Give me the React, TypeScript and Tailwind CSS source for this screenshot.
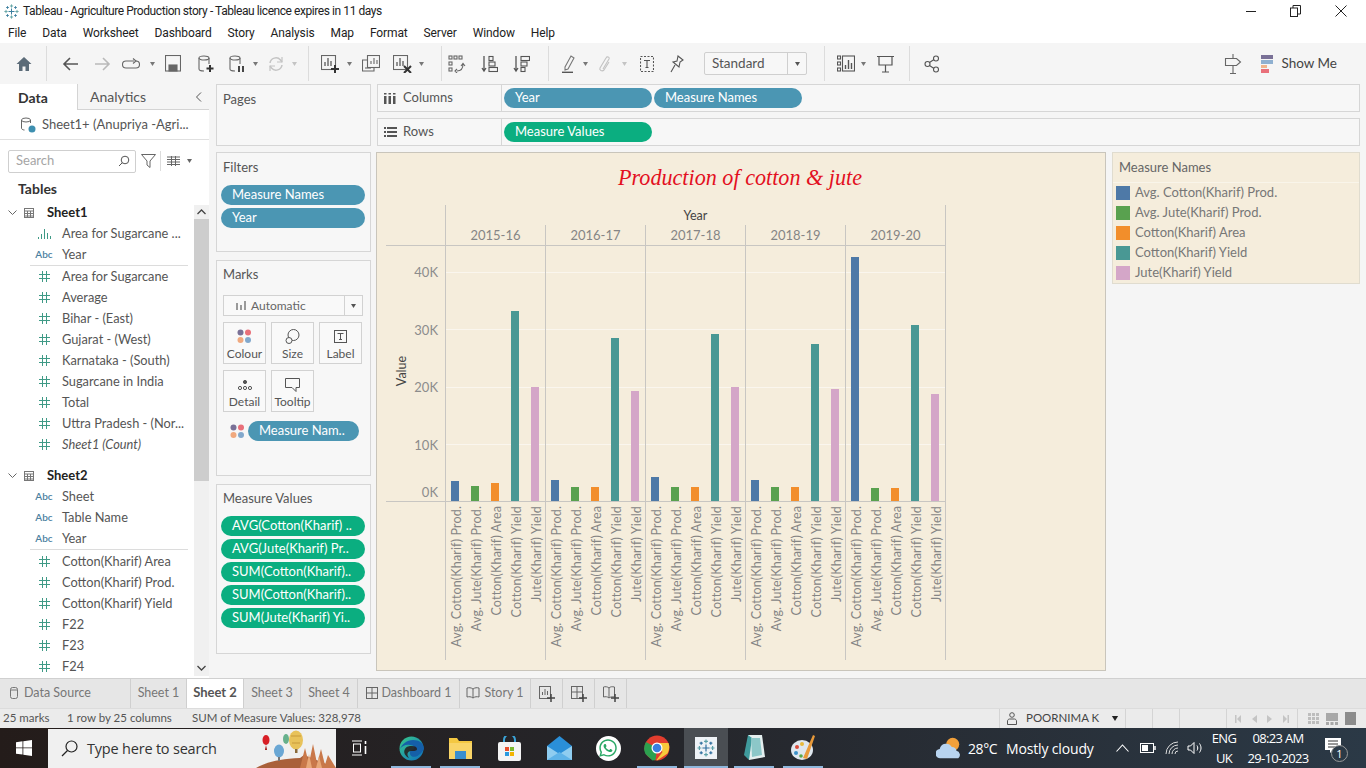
import React from "react";
import { FaWhatsapp } from "react-icons/fa";

const UI = "font-['Lato','Open_Sans',sans-serif]";

function Ic({ w, h = 18, cls = "", children }: { w: number; h?: number; cls?: string; children: React.ReactNode }) {
  return (
    <svg width={w} height={h} viewBox={`0 0 ${w} ${h}`} fill="none" stroke="currentColor" strokeWidth="1.1" className={`shrink-0 ${cls}`}>
      {children}
    </svg>
  );
}

function Caret({ cls = "" }: { cls?: string }) {
  return (
    <svg width="5" height="4" viewBox="0 0 5 4" className={`shrink-0 ${cls}`}>
      <path d="M0 0h5L2.5 4z" fill="currentColor" />
    </svg>
  );
}

function Sep({ cls = "" }: { cls?: string }) {
  return <div className={`w-px h-[35px] bg-[#dcdcdc] shrink-0 ${cls}`} />;
}

function TableauLogo({ size = 15, dark = false }: { size?: number; dark?: boolean }) {
  const c1 = dark ? "#2f6f9f" : "#3d7f9f";
  const c2 = dark ? "#5aa0a8" : "#6aa8a8";
  const Cross = ({ x, y, r, c }: { x: number; y: number; r: number; c: string }) => (
    <path d={`M${x - r} ${y}H${x + r}M${x} ${y - r}V${y + r}`} stroke={c} strokeWidth="1" />
  );
  return (
    <svg width={size} height={size} viewBox="0 0 15 15" className="shrink-0">
      <Cross x={7.5} y={7.5} r={3} c={c1} />
      <Cross x={7.5} y={2} r={1.6} c={c2} />
      <Cross x={7.5} y={13} r={1.6} c={c2} />
      <Cross x={2} y={7.5} r={1.6} c={c2} />
      <Cross x={13} y={7.5} r={1.6} c={c2} />
      <Cross x={3.5} y={3.5} r={1.3} c={c1} />
      <Cross x={11.5} y={3.5} r={1.3} c={c1} />
      <Cross x={3.5} y={11.5} r={1.3} c={c1} />
      <Cross x={11.5} y={11.5} r={1.3} c={c1} />
    </svg>
  );
}

function Toolbar() {
  return (
    <div className="h-[41px] bg-[#f5f5f5] flex items-center shrink-0 text-[#555]">
      <Ic w={16} h={16} cls="ml-[16px] text-[#5b6b78]">
        <path d="M8 1L0.5 8H3v7h3.5v-4.5h3V15H13V8h2.5z" fill="currentColor" stroke="none" />
      </Ic>
      <Sep cls="ml-[14px]" />
      <Ic w={17} cls="ml-[15px] text-[#555]">
        <path d="M16 9H2M8 3L2 9l6 6" strokeWidth="1.6" />
      </Ic>
      <Ic w={17} cls="ml-[15px] text-[#b9b9b9]">
        <path d="M1 9h14M9 3l6 6-6 6" strokeWidth="1.6" />
      </Ic>
      <Ic w={18} cls="ml-[11px] text-[#666]">
        <path d="M12 6H4a3 3 0 000 7h10a3 3 0 000-7" />
        <path d="M11 3.5L14 6l-3 2.5" />
      </Ic>
      <Caret cls="ml-[10px] text-[#777]" />
      <Ic w={16} h={17} cls="ml-[10px] text-[#666]">
        <rect x=".5" y=".5" width="15" height="15.5" />
        <rect x="4" y="10" width="8" height="6" fill="currentColor" />
      </Ic>
      <Ic w={17} cls="ml-[16px] text-[#666]">
        <ellipse cx="7" cy="3" rx="5" ry="2" />
        <path d="M2 3v11c0 1 1 2 5 2M12 3v6" />
        <path d="M13 10v7M9.5 13.5h7" stroke="#333" strokeWidth="2" />
      </Ic>
      <Ic w={17} cls="ml-[14px] text-[#666]">
        <ellipse cx="7" cy="3" rx="5" ry="2" />
        <path d="M2 3v11c0 1 1 2 5 2M12 3v6" />
        <path d="M11 11v6M15 11v6" stroke="#333" strokeWidth="1.8" />
      </Ic>
      <Caret cls="ml-[8px] text-[#777]" />
      <Ic w={16} cls="ml-[10px] text-[#c4c4c4]">
        <path d="M2 8a6 6 0 0110.5-3L14 7M14 10a6 6 0 01-10.5 3L2 11" strokeWidth="1.5" />
        <path d="M14 2v5H9M2 16v-5h5" strokeWidth="1.2" />
      </Ic>
      <Caret cls="ml-[8px] text-[#c4c4c4]" />
      <Sep cls="ml-[11px]" />
      <Ic w={19} cls="ml-[12px] text-[#666]">
        <rect x=".5" y=".5" width="14" height="14" />
        <path d="M4 11V7M7 11V3M10 11V6" strokeWidth="1.4" />
        <path d="M14 10v8M10 14h8" stroke="#333" strokeWidth="2" />
      </Ic>
      <Caret cls="ml-[7px] text-[#777]" />
      <Ic w={18} cls="ml-[10px] text-[#666]">
        <rect x="5.5" y=".5" width="12" height="12" />
        <path d="M9 9V6M12 9V3M15 9V5" />
        <path d="M5 5H.5v11H12v-3" />
        <path d="M3 13h6" />
      </Ic>
      <Ic w={19} cls="ml-[13px] text-[#666]">
        <rect x=".5" y=".5" width="14" height="14" />
        <path d="M4 11V7M7 11V3M10 11V6" strokeWidth="1.4" />
        <path d="M11 11l7 7M18 11l-7 7" stroke="#333" strokeWidth="2" />
      </Ic>
      <Caret cls="ml-[7px] text-[#777]" />
      <Sep cls="ml-[17px]" />
      <Ic w={18} cls="ml-[6px] text-[#666]">
        <rect x="1" y="1" width="3" height="3" /><rect x="6" y="1" width="3" height="3" /><rect x="11" y="1" width="3" height="3" />
        <rect x="1" y="7" width="3" height="3" /><rect x="1" y="13" width="3" height="3" />
        <path d="M9 16c4 0 6-2 6-7M13 11l2-2.500 2 2.500M9 14l-2 2 2 2" />
      </Ic>
      <Ic w={17} cls="ml-[15px] text-[#555]">
        <path d="M3 1v15M1 13l2 3 2-3" strokeWidth="1.3" />
        <rect x="8" y="1.500" width="4" height="4" /><rect x="8" y="7" width="6" height="4" /><rect x="8" y="12.500" width="8.500" height="4" />
      </Ic>
      <Ic w={17} cls="ml-[15px] text-[#555]">
        <path d="M3 1v15M1 13l2 3 2-3" strokeWidth="1.3" />
        <rect x="8" y="1.500" width="8.500" height="4" /><rect x="8" y="7" width="6" height="4" /><rect x="8" y="12.500" width="4" height="4" />
      </Ic>
      <Sep cls="ml-[18px]" />
      <Ic w={14} cls="ml-[12px] text-[#777]">
        <path d="M4 12L10 1l3 2-6 11-3 1z" />
        <path d="M1 17.500h11" stroke="#555" strokeWidth="1.8" />
      </Ic>
      <Caret cls="ml-[8px] text-[#777]" />
      <Ic w={13} cls="ml-[10px] text-[#c2c2c2]">
        <path d="M11 7l-5 8c-2 2-5 0-4-2l6-10c1-2 4-1 3 1l-6 10" />
      </Ic>
      <Caret cls="ml-[11px] text-[#c4c4c4]" />
      <Ic w={14} h={16} cls="ml-[13px] text-[#555]">
        <rect x=".5" y=".5" width="13" height="15" strokeDasharray="2 1.500" />
        <path d="M4 4.500h6M7 4.500v7M5.500 11.500h3" />
      </Ic>
      <Ic w={14} cls="ml-[16px] text-[#555]">
        <path d="M8 1l5 4-3 2-1 5-6-5 4-1zM5 10l-4 7" />
      </Ic>
      <div className="ml-[20px] w-[103px] h-[23px] border border-[#cfcfcf] rounded-[2px] bg-[#f7f7f7] flex items-center shrink-0">
        <span className="pl-[7px] flex-1 text-[13.5px] text-[#555]">Standard</span>
        <div className="w-[19px] h-[21px] border-l border-[#cfcfcf] flex items-center justify-center">
          <Caret cls="text-[#555]" />
        </div>
      </div>
      <Sep cls="ml-[17px]" />
      <Ic w={18} cls="ml-[12px] text-[#555]">
        <rect x=".5" y="1" width="3" height="3" /><rect x=".5" y="7" width="3" height="3" /><rect x=".5" y="13" width="3" height="3" />
        <rect x="5.500" y="1" width="12" height="15" />
        <path d="M8.500 14v-4M11.500 14V5M14.500 14V8" strokeWidth="1.4" />
      </Ic>
      <Caret cls="ml-[6px] text-[#777]" />
      <Ic w={17} cls="ml-[11px] text-[#555]">
        <path d="M0 1.500h17M2 1.500V10h13V1.500M8.500 10v7M5 17h7" strokeWidth="1.2" />
      </Ic>
      <Sep cls="ml-[15px]" />
      <Ic w={16} cls="ml-[14px] text-[#555]">
        <circle cx="3.500" cy="9" r="2.500" /><circle cx="12" cy="3.500" r="2.500" /><circle cx="12" cy="14.500" r="2.500" />
        <path d="M5.500 7.500l4.500-3M5.500 10.500l4.500 3" />
      </Ic>
      <div className="flex-1" />
      <Ic w={18} h={20} cls="text-[#666]">
        <path d="M9 0v4.500M1.500 4.500h11l4 3.500-4 3.500h-11zM9 11.500V19.500M6 19.500h6" />
      </Ic>
      <div className="ml-[19px] w-[12px] flex flex-col gap-[1px] shrink-0">
        <div className="h-[4px] w-[12px] bg-[#7a7197]" />
        <div className="h-[4px] w-[12px] bg-[#8fb0d0]" />
        <div className="h-[3px] w-[6px] bg-[#f0b48c]" />
        <div className="h-[4px] w-[8px] bg-[#e9707a]" />
      </div>
      <span className="ml-[8px] mr-[29px] text-[13.5px] text-[#444]">Show Me</span>
    </div>
  );
}

type Kind = "hash" | "abc" | "bars";

function FieldIcon({ k }: { k: Kind }) {
  if (k === "abc") return <span className="w-[24px] text-center text-[10px] font-semibold text-[#4b7f9f]">Abc</span>;
  if (k === "bars")
    return (
      <span className="w-[24px] flex justify-center">
        <svg width="15" height="10" viewBox="0 0 15 10" stroke="#3f9a86" strokeWidth="1">
          <path d="M1.500 10V8M4.500 10V5M7.500 10V0M10.500 10V4M13.500 10V7" />
        </svg>
      </span>
    );
  return (
    <span className="w-[24px] flex justify-center">
      <svg width="11" height="11" viewBox="0 0 11 11" stroke="#3f9a86" strokeWidth="1">
        <path d="M3.500 0v11M7.500 0v11M0 3.500h11M0 7.500h11" />
      </svg>
    </span>
  );
}

function Field({ k, t, i }: { k: Kind; t: string; i?: boolean }) {
  return (
    <div className="h-[21px] flex items-center pl-[32px] shrink-0">
      <FieldIcon k={k} />
      <span className={`ml-[6px] text-[12.8px] whitespace-nowrap text-[#555] ${i ? "italic" : ""}`}>{t}</span>
    </div>
  );
}

function TableHead({ t }: { t: string }) {
  return (
    <div className="h-[21px] flex items-center shrink-0">
      <svg width="9" height="6" viewBox="0 0 9 6" className="ml-[8px]" fill="none" stroke="#666"><path d="M.5.500l4 4 4-4" /></svg>
      <svg width="10" height="10" viewBox="0 0 10 10" className="ml-[7px]" fill="none" stroke="#777" strokeWidth="1"><rect x=".5" y=".5" width="9" height="9" /><path d="M0 3h10M0 5.500h10M0 8h10M3.500 3v7M6.500 3v7" /></svg>
      <span className="ml-[13px] text-[13px] font-bold text-[#222]">{t}</span>
    </div>
  );
}

function DataPane() {
  return (
    <div className="w-[209px] h-full bg-white flex flex-col shrink-0 overflow-hidden">
      <div className="h-[26px] flex shrink-0">
        <div className="w-[77px] flex items-center pl-[18px] text-[14px] font-bold text-[#333]">Data</div>
        <div className="flex-1 bg-[#f5f5f5] border-l border-b border-[#d4d4d4] flex items-center pl-[12px] text-[14px] text-[#555]">
          <span className="flex-1">Analytics</span>
          <svg width="7" height="10" viewBox="0 0 7 10" fill="none" stroke="#555" className="mr-[7px]"><path d="M6 .5L1.500 5 6 9.500" /></svg>
        </div>
      </div>
      <div className="h-[30px] flex items-center pl-[20px] border-b border-[#e0e0e0] shrink-0">
        <svg width="16" height="16" viewBox="0 0 16 16" fill="none" stroke="#666" className="shrink-0">
          <ellipse cx="6" cy="3" rx="4.500" ry="2" /><path d="M1.500 3v8c0 1 1 2 3 2M10.500 3v3" />
          <circle cx="12" cy="12" r="3.500" fill="#3e8fb0" stroke="none" />
        </svg>
        <span className="ml-[6px] text-[13px] text-[#555] whitespace-nowrap">Sheet1+ (Anupriya -Agri...</span>
      </div>
      <div className="h-[40px] pt-[2px] flex items-center shrink-0">
        <div className="ml-[8px] w-[128px] h-[23px] border border-[#cfcfcf] rounded-[2px] flex items-center pl-[7px]">
          <span className="flex-1 text-[13px] text-[#a5a5a5]">Search</span>
          <svg width="12" height="12" viewBox="0 0 12 12" fill="none" stroke="#555" className="mr-[5px]"><circle cx="7" cy="5" r="3.800" /><path d="M4.300 7.700L1 11" /></svg>
        </div>
        <svg width="15" height="14" viewBox="0 0 15 14" fill="none" stroke="#666" className="ml-[5px]"><path d="M.5.500h14L9 7v6.500L6 11V7z" /></svg>
        <div className="w-px h-[20px] bg-[#dcdcdc] ml-[4px]" />
        <svg width="13" height="10" viewBox="0 0 13 10" stroke="#666" className="ml-[6px]" fill="none"><path d="M0 1h13M0 3.500h13M0 6h13M0 8.500h13M4.500 0v10M8.500 0v10" /></svg>
        <Caret cls="ml-[7px] text-[#666]" />
      </div>
      <div className="flex-1 flex min-h-0">
        <div className="flex-1 min-w-0 flex flex-col overflow-hidden">
          <div className="h-[16px] flex items-center pl-[18px] text-[14px] font-bold text-[#333] shrink-0">Tables</div>
          <div className="h-[6px] shrink-0" />
          <TableHead t="Sheet1" />
          <Field k="bars" t="Area for Sugarcane ..." />
          <Field k="abc" t="Year" />
          <div className="h-px bg-[#dcdcdc] ml-[30px] mr-[6px] shrink-0" />
          <Field k="hash" t="Area for Sugarcane" />
          <Field k="hash" t="Average" />
          <Field k="hash" t="Bihar - (East)" />
          <Field k="hash" t="Gujarat - (West)" />
          <Field k="hash" t="Karnataka - (South)" />
          <Field k="hash" t="Sugarcane in India" />
          <Field k="hash" t="Total" />
          <Field k="hash" t="Uttra Pradesh - (Nor..." />
          <Field k="hash" t="Sheet1 (Count)" i />
          <div className="h-[10px] shrink-0" />
          <TableHead t="Sheet2" />
          <Field k="abc" t="Sheet" />
          <Field k="abc" t="Table Name" />
          <Field k="abc" t="Year" />
          <div className="h-[2px] border-t border-[#dcdcdc] ml-[30px] mr-[6px] shrink-0" />
          <Field k="hash" t="Cotton(Kharif) Area" />
          <Field k="hash" t="Cotton(Kharif) Prod." />
          <Field k="hash" t="Cotton(Kharif) Yield" />
          <Field k="hash" t="F22" />
          <Field k="hash" t="F23" />
          <Field k="hash" t="F24" />
        </div>
        <div className="w-[15px] bg-[#f0f0f0] flex flex-col shrink-0 mt-[25px] mb-[2px]">
          <div className="h-[14px] flex items-center justify-center shrink-0">
            <svg width="9" height="6" viewBox="0 0 9 6" fill="none" stroke="#444" strokeWidth="1.300"><path d="M.5 5l4-4 4 4" /></svg>
          </div>
          <div className="h-[262px] bg-[#cdcdcd] shrink-0" />
          <div className="flex-1" />
          <div className="h-[16px] flex items-center justify-center shrink-0">
            <svg width="9" height="6" viewBox="0 0 9 6" fill="none" stroke="#444" strokeWidth="1.300"><path d="M.5 1l4 4 4-4" /></svg>
          </div>
        </div>
      </div>
    </div>
  );
}

function Pill({ t, green, cls = "" }: { t: string; green?: boolean; cls?: string }) {
  return (
    <div className={`h-[20px] rounded-full flex items-center pl-[11px] text-[13px] text-white whitespace-nowrap overflow-hidden shrink-0 ${green ? "bg-[#0bae80]" : "bg-[#4b96b3]"} ${cls}`}>
      {t}
    </div>
  );
}

function Card({ cls = "", children }: { cls?: string; children: React.ReactNode }) {
  return <div className={`bg-[#f7f7f7] border border-[#d6d6d6] shrink-0 ${cls}`}>{children}</div>;
}

function CardTitle({ t }: { t: string }) {
  return <div className="pl-[6px] text-[13px] text-[#555] leading-[16px]">{t}</div>;
}

function Dots() {
  return (
    <svg width="15" height="15" viewBox="0 0 15 15" className="shrink-0">
      <circle cx="3.500" cy="3.500" r="3" fill="#7a7197" /><circle cx="11" cy="3.500" r="3" fill="#e9707a" />
      <circle cx="3.500" cy="11" r="3" fill="#f0a97f" /><circle cx="11" cy="11" r="3" fill="#82a8cc" />
    </svg>
  );
}

function MarkBtn({ icon, t }: { icon: React.ReactNode; t: string }) {
  return (
    <div className="w-[43px] h-[42px] border border-[#d2d2d2] bg-[#f9f9f9] flex flex-col items-center justify-between pt-[5px] pb-[2px] text-[12px] leading-[14px] text-[#555]">
      <div className="h-[17px] flex items-center">{icon}</div>
      <span>{t}</span>
    </div>
  );
}

function MiddleColumn() {
  return (
    <div className="ml-[7px] w-[155px] flex flex-col shrink-0">
      <Card cls="h-[62px] pt-[6px]"><CardTitle t="Pages" /></Card>
      <Card cls="mt-[6px] h-[100px] pt-[6px]">
        <CardTitle t="Filters" />
        <div className="mt-[10px] px-[4px] flex flex-col gap-[3px]">
          <Pill t="Measure Names" cls="w-[144px]" />
          <Pill t="Year" cls="w-[144px]" />
        </div>
      </Card>
      <Card cls="mt-[8px] h-[216px] pt-[5px]">
        <CardTitle t="Marks" />
        <div className="mt-[13px] ml-[6px] w-[140px] h-[21px] border border-[#d2d2d2] bg-[#f9f9f9] flex items-center">
          <svg width="10" height="9" viewBox="0 0 10 9" className="ml-[12px]" fill="#9a9a9a"><rect x="0" y="2" width="2" height="7" /><rect x="4" y="4" width="2" height="5" /><rect x="8" y="0" width="2" height="9" /></svg>
          <span className="ml-[5px] flex-1 text-[12px] text-[#666]">Automatic</span>
          <div className="w-[18px] h-full border-l border-[#d2d2d2] flex items-center justify-center"><Caret cls="text-[#555]" /></div>
        </div>
        <div className="mt-[6px] ml-[6px] grid grid-cols-[43px_43px_43px] gap-x-[5px] gap-y-[6px]">
          <MarkBtn t="Colour" icon={<Dots />} />
          <MarkBtn t="Size" icon={<svg width="15" height="15" viewBox="0 0 15 15" fill="none" stroke="#555"><circle cx="8.500" cy="6" r="5.500" /><circle cx="4" cy="11.500" r="3" fill="#f9f9f9" /></svg>} />
          <MarkBtn t="Label" icon={<svg width="13" height="13" viewBox="0 0 13 13" fill="none" stroke="#555"><rect x=".5" y=".5" width="12" height="12" /><path d="M3.500 3.500h6M6.500 3.500v6M5 9.500h3" /></svg>} />
          <MarkBtn t="Detail" icon={<svg width="14" height="10" viewBox="0 0 14 10" fill="none" stroke="#555"><circle cx="7" cy="2" r="1.600" fill="#555" /><circle cx="2" cy="8" r="1.600" /><circle cx="7" cy="8" r="1.600" /><circle cx="12" cy="8" r="1.600" /></svg>} />
          <MarkBtn t="Tooltip" icon={<svg width="15" height="14" viewBox="0 0 15 14" fill="none" stroke="#555"><path d="M.5.500h14v9h-3.500v4l-4-4H.5z" /></svg>} />
        </div>
        <div className="mt-[9px] ml-[13px] flex items-center gap-[3px]">
          <Dots />
          <Pill t="Measure Nam.." cls="w-[111px]" />
        </div>
      </Card>
      <Card cls="mt-[8px] h-[170px] pt-[5px]">
        <CardTitle t="Measure Values" />
        <div className="mt-[10px] px-[4px] flex flex-col gap-[3px]">
          <Pill green t="AVG(Cotton(Kharif) .." cls="w-[144px]" />
          <Pill green t="AVG(Jute(Kharif) Pr.." cls="w-[144px]" />
          <Pill green t="SUM(Cotton(Kharif).." cls="w-[144px]" />
          <Pill green t="SUM(Cotton(Kharif).." cls="w-[144px]" />
          <Pill green t="SUM(Jute(Kharif) Yi.." cls="w-[144px]" />
        </div>
      </Card>
    </div>
  );
}

const COLORS = ["#4e79a7", "#59a14f", "#f28e2b", "#499894", "#d4a6c8"];
const LEGEND_BG = ["bg-[#4e79a7]", "bg-[#59a14f]", "bg-[#f28e2b]", "bg-[#499894]", "bg-[#d4a6c8]"];
const LABELS = ["Avg. Cotton(Kharif) Prod.", "Avg. Jute(Kharif) Prod.", "Cotton(Kharif) Area", "Cotton(Kharif) Yield", "Jute(Kharif) Yield"];
const TOPS = [
  [481, 486, 483, 311, 387],
  [480, 487, 487, 338, 391],
  [477, 487, 487, 334, 387],
  [480, 487, 487, 344, 389],
  [257, 488, 488, 325, 394],
];
const YEARS = ["2015-16", "2016-17", "2017-18", "2018-19", "2019-20"];

function Chart() {
  const font = "Lato, 'Open Sans', sans-serif";
  return (
    <svg viewBox="377 153 728 517" className="w-[730px] h-[519px] block bg-[#f5eddc] border border-[#c9c5bb] shrink-0" fontFamily={font}>
      <text x="740" y="185" textAnchor="middle" fontFamily="'Liberation Serif', serif" fontStyle="italic" fontSize="24" fill="#e3101f" textLength="244" lengthAdjust="spacingAndGlyphs">Production of cotton &amp; jute</text>
      <text x="695.500" y="220" textAnchor="middle" fontSize="12.500" fill="#444">Year</text>
      {[272.5, 329.5, 387.5, 444.5].map((y) => <line key={y} x1="446" x2="945" y1={y} y2={y} stroke="#faf6ee" />)}
      {[445.5, 545.5, 645.5, 745.5, 845.5, 945.5].map((x, i) => (
        <line key={x} x1={x} x2={x} y1={i === 0 || i === 5 ? 205 : 225} y2="660" stroke="#c8c6c2" />
      ))}
      <line x1="386" x2="946" y1="245.500" y2="245.500" stroke="#c8c6c2" />
      <line x1="386" x2="946" y1="501.500" y2="501.500" stroke="#c8c6c2" />
      {YEARS.map((y, i) => <text key={y} x={495.5 + i * 100} y="239.500" textAnchor="middle" fontSize="13" fill="#858585">{y}</text>)}
      {[["40K", 272], ["30K", 329.5], ["20K", 387], ["10K", 444.5], ["0K", 492]].map(([t, y]) => (
        <text key={t as string} x="438" y={(y as number) + 5} textAnchor="end" fontSize="13" fill="#8c8c8c">{t}</text>
      ))}
      <text transform="translate(406 371) rotate(-90)" textAnchor="middle" fontSize="12.500" fill="#444">Value</text>
      {TOPS.map((g, i) =>
        g.map((top, j) => {
          const x = 451 + i * 100 + j * 20;
          return (
            <g key={`${i}-${j}`}>
              <rect x={x} y={top} width="8" height={501 - top} fill={COLORS[j]} />
              <text transform={`translate(${x + 10} 506) rotate(-90)`} textAnchor="end" fontSize="12.500" fill="#858585" letterSpacing=".15">{LABELS[j]}</text>
            </g>
          );
        })
      )}
    </svg>
  );
}

function Shelf({ label, icon, children }: { label: string; icon: React.ReactNode; children: React.ReactNode }) {
  return (
    <div className="h-[28px] bg-[#f7f7f7] border border-[#d6d6d6] flex shrink-0">
      <div className="w-[124px] border-r border-[#d6d6d6] flex items-center pl-[6px] text-[13px] text-[#555]">
        <span className="w-[17px] flex">{icon}</span>
        <span className="ml-[2px]">{label}</span>
      </div>
      <div className="flex items-center pl-[2px] gap-[2px]">{children}</div>
    </div>
  );
}

function RightColumn() {
  return (
    <div className="ml-[6px] w-[983px] flex flex-col shrink-0">
      <Shelf label="Columns" icon={<svg width="12" height="11" viewBox="0 0 12 11" fill="#555"><rect x="0" y="3" width="2.500" height="8" /><rect x="4.500" y="3" width="2.500" height="8" /><rect x="9" y="3" width="2.500" height="8" /><rect x="0" y="0" width="2.500" height="1.500" /><rect x="4.500" y="0" width="2.500" height="1.500" /><rect x="9" y="0" width="2.500" height="1.500" /></svg>}>
        <Pill t="Year" cls="w-[148px]" />
        <Pill t="Measure Names" cls="w-[148px]" />
      </Shelf>
      <div className="mt-[6px]">
        <Shelf label="Rows" icon={<svg width="13" height="10" viewBox="0 0 13 10" fill="#555"><rect x="3" y="0" width="10" height="2" /><rect x="3" y="4" width="10" height="2" /><rect x="3" y="8" width="10" height="2" /><rect x="0" y="0" width="2" height="2" /><rect x="0" y="4" width="2" height="2" /><rect x="0" y="8" width="2" height="2" /></svg>}>
          <Pill green t="Measure Values" cls="w-[148px]" />
        </Shelf>
      </div>
      <div className="mt-[6px] ml-[-1px] flex items-start">
        <Chart />
        <div className="ml-[6px] w-[248px] h-[132px] bg-[#f5eddc] border border-[#e0dccf] shrink-0">
          <div className="h-[29px] flex items-center pl-[6px] text-[13px] text-[#666]">Measure Names</div>
          <div className="h-px bg-[#f9f5ea]" />
          <div>
            {LABELS.map((l, i) => (
              <div key={l} className="h-[20px] flex items-center pl-[3px]">
                <span className={`w-[14px] h-[14px] shrink-0 ${LEGEND_BG[i]}`} />
                <span className="ml-[5px] text-[13px] text-[#777] whitespace-nowrap">{l}</span>
              </div>
            ))}
          </div>
        </div>
      </div>
    </div>
  );
}

function Tab({ t, w, icon, active }: { t: string; w: string; icon?: React.ReactNode; active?: boolean }) {
  return (
    <div className={`${w} h-full border-r border-[#cfcfcf] flex items-center justify-center gap-[4px] shrink-0 ${active ? "bg-white text-[13px] font-bold text-[#555] pb-[2px]" : "text-[12.5px] text-[#777] pb-[1px]"}`}>
      {icon}
      <span>{t}</span>
    </div>
  );
}

function TabBar() {
  const grid = <svg width="12" height="12" viewBox="0 0 12 12" fill="none" stroke="#666"><rect x=".5" y=".5" width="11" height="11" /><path d="M6 0v12M0 6h12" /></svg>;
  const book = <svg width="14" height="12" viewBox="0 0 14 12" fill="none" stroke="#666"><path d="M7 2C5 .5 3 .5 1 1v9c2-.5 4-.5 6 1 2-1.500 4-1.500 6-1V1C11 .5 9 .5 7 2zM7 2v9" /></svg>;
  return (
    <div className="h-[30px] bg-[#e6e6e6] border-t border-[#d0d0d0] flex shrink-0">
      <div className="w-[131px] h-full border-r border-[#cfcfcf] flex items-center pl-[10px] pb-[1px] text-[12.5px] text-[#777] shrink-0">
        <svg width="8" height="12" viewBox="0 0 8 12" fill="none" stroke="#777"><rect x=".5" y=".5" width="7" height="11" rx="2" /><path d="M.5 3h7" /></svg>
        <span className="ml-[6px]">Data Source</span>
      </div>
      <Tab t="Sheet 1" w="w-[56px]" />
      <Tab t="Sheet 2" w="w-[57px]" active />
      <Tab t="Sheet 3" w="w-[57px]" />
      <Tab t="Sheet 4" w="w-[57px]" />
      <Tab t="Dashboard 1" w="w-[102px]" icon={grid} />
      <Tab t="Story 1" w="w-[71px]" icon={book} />
      {[
        <g key="a"><rect x=".5" y=".5" width="11" height="12" /><path d="M3.500 9V6M6 9V3M8.500 9V5" /></g>,
        <g key="b"><rect x=".5" y=".5" width="11" height="12" /><path d="M6 0v12M0 6h12" /></g>,
        <g key="c"><path d="M6 2C4.500 .5 2 .5 .5 1v10c2-.5 4-.5 5.500 1 1-1 3-1.500 5.500-1V1C9 .5 7.500 .5 6 2zM6 2v10" /></g>,
      ].map((g) => (
        <div key={g.key} className="w-[32px] h-full border-r border-[#cfcfcf] flex items-center justify-center shrink-0">
          <svg width="16" height="16" viewBox="0 0 16 16" fill="none" stroke="#666">
            {g}
            <path d="M12 8v8M8 12h8" stroke="#444" strokeWidth="1.500" />
          </svg>
        </div>
      ))}
    </div>
  );
}

function StatusBar() {
  return (
    <div className="h-[20px] bg-[#ebebeb] flex items-center text-[11.5px] text-[#555] shrink-0 border-t border-[#dcdcdc]">
      <span className="ml-[3px] w-[64px] pb-[2px]">25 marks</span>
      <span className="w-[125px] whitespace-nowrap pb-[2px]">1 row by 25 columns</span>
      <span className="whitespace-nowrap pb-[2px]">SUM of Measure Values: 328,978</span>
      <div className="ml-auto flex h-full items-center">
        <div className="w-[127px] h-full border-x border-[#d4d4d4] flex items-center pl-[7px]">
          <svg width="10" height="13" viewBox="0 0 10 13" fill="none" stroke="#555"><circle cx="5" cy="3" r="2.300" /><path d="M.5 12.500V9c0-1 1-2 2-2h5c1 0 2 1 2 2v3.500z" /></svg>
          <span className="ml-[9px] flex-1 text-[#444] pb-[2px]">POORNIMA K</span>
          <Caret cls="w-[8px] h-[5px] mr-[6px] text-[#222]" />
        </div>
        <div className="w-[27px] h-full border-r border-[#d4d4d4]" />
        <div className="w-[27px] h-full border-r border-[#d4d4d4]" />
        <div className="w-[47px] h-full border-r border-[#d4d4d4]" />
        <div className="w-[71px] h-full border-r border-[#d4d4d4] flex items-center justify-around px-[3px] text-[#c4c4c4]">
          <svg width="6" height="8" viewBox="0 0 6 8" fill="currentColor"><rect width="1.500" height="8" /><path d="M6 0v8L2 4z" /></svg>
          <svg width="5" height="8" viewBox="0 0 5 8" fill="currentColor"><path d="M5 0v8L0 4z" /></svg>
          <svg width="5" height="8" viewBox="0 0 5 8" fill="currentColor"><path d="M0 0v8l5-4z" /></svg>
          <svg width="6" height="8" viewBox="0 0 6 8" fill="currentColor"><rect x="4.500" width="1.500" height="8" /><path d="M0 0v8l4-4z" /></svg>
        </div>
        <div className="w-[68px] flex items-center justify-around px-[6px]">
          <svg width="11" height="11" viewBox="0 0 11 11" fill="#bdbdbd"><rect width="3" height="3" /><rect x="4" width="3" height="3" /><rect x="8" width="3" height="3" /><rect y="4" width="3" height="3" /><rect x="4" y="4" width="3" height="3" /><rect x="8" y="4" width="3" height="3" /><rect y="8" width="3" height="3" /><rect x="4" y="8" width="3" height="3" /><rect x="8" y="8" width="3" height="3" /></svg>
          <svg width="12" height="12" viewBox="0 0 12 12" fill="#a8a8a8"><rect width="12" height="8" /><rect y="9" width="3" height="3" /><rect x="4.500" y="9" width="3" height="3" /><rect x="9" y="9" width="3" height="3" /></svg>
          <div className="w-[11px] h-[13px] bg-[#8c8c8c]" />
        </div>
      </div>
    </div>
  );
}

function TaskIcon({ w, ml, children, bar }: { w: string; ml: string; children: React.ReactNode; bar?: boolean }) {
  return (
    <div className={`${w} ${ml} h-full relative flex items-center justify-center shrink-0`}>
      {children}
      {bar && <div className="absolute bottom-0 left-0 right-0 h-[2px] bg-[#8fb7dc]" />}
    </div>
  );
}

function Taskbar() {
  return (
    <div className="h-[40px] bg-gradient-to-r from-[#241c1a] via-[#25262b] to-[#2b3946] flex items-center shrink-0 text-white font-['Open_Sans',sans-serif]">
      <div className="w-[48px] flex justify-center shrink-0">
        <svg width="16" height="16" viewBox="0 0 16 16" fill="#fff"><path d="M0 2.200l6.500-.9v6.200H0zM7.300 1.200L16 0v7.500H7.300zM0 8.300h6.500v6.300L0 13.800zM7.300 8.300H16V16l-8.700-1.200z" /></svg>
      </div>
      <div className="w-[288px] h-[39px] mt-[1px] bg-[#f0f0f0] flex items-center relative overflow-hidden shrink-0">
        <svg width="17" height="17" viewBox="0 0 17 17" fill="none" stroke="#222" strokeWidth="1.200" className="ml-[13px]"><circle cx="10.500" cy="6.500" r="5.500" /><path d="M6.500 10.500L1 16" /></svg>
        <span className="ml-[9px] text-[14.500px] text-[#333] tracking-[-0.2px]">Type here to search</span>
        <svg width="80" height="39" viewBox="0 0 80 39" className="absolute right-0 top-0">
          <path d="M0 39c10-6 24-9 44-10l4-3 32 13z" fill="#a9603a" />
          <path d="M44 39l5-20 5 20zM52 39l5-24 5 24zM60 39l5-19 5 20zM68 39l4-13 8 13z" fill="#c9784a" />
          <path d="M50 39l3-14 3 14zM60 39l3-12 3 12z" fill="#e8a878" />
          <ellipse cx="10" cy="11" rx="3.500" ry="5" fill="#d81f26" /><path d="M10 16l-1 5h2z" fill="#a01010" />
          <ellipse cx="30" cy="10" rx="3" ry="5" fill="#66b08c" />
          <ellipse cx="23" cy="22" rx="5" ry="6.500" fill="#6aa7d4" /><rect x="22" y="28" width="2" height="4" fill="#777" />
          <ellipse cx="40" cy="11" rx="7" ry="9.500" fill="#e8c25a" /><path d="M35 7h10M36 14h8" stroke="#c89a3a" /><rect x="39" y="20" width="2.500" height="4" fill="#8a6a3a" />
        </svg>
      </div>
      <TaskIcon ml="ml-[14px]" w="w-[20px]">
        <svg width="16" height="16" viewBox="0 0 16 16" fill="none" stroke="#fff"><path d="M0 1h10M0 15h10" /><rect x="1.500" y="4" width="7" height="8" /><path d="M13.500 1v3M13.500 6v8" strokeWidth="1.600" /></svg>
      </TaskIcon>
      <TaskIcon ml="ml-[21px]" w="w-[40px]" bar>
        <svg width="25" height="25" viewBox="0 0 25 25">
          <defs>
            <linearGradient id="eg" x1="0" y1="0" x2="1" y2="1"><stop offset="0" stopColor="#38c98a" /><stop offset="1" stopColor="#0e6fc0" /></linearGradient>
          </defs>
          <circle cx="12.500" cy="12.500" r="12" fill="url(#eg)" />
          <path d="M25 13c0-6-5-9-11-9C8 4 3 8 1 13c2-3 6-5 10-4 4 0 5 3 4 4-1 1-5 1-4 5 1 4 8 5 14-5z" fill="#155fa8" />
          <path d="M13 10c3 0 5 1 5 3s-3 2-6 2-5 3-2 7c-4-2-6-6-4-9s4-3 7-3z" fill="#241c1a" opacity=".85" />
        </svg>
      </TaskIcon>
      <TaskIcon ml="ml-[9px]" w="w-[40px]" bar>
        <svg width="23" height="22" viewBox="0 0 23 22">
          <path d="M0 1h8l2 3h13v16H0z" fill="#f4c842" />
          <rect y="6" width="23" height="16" fill="#f9d568" />
          <rect x="6" y="14" width="11" height="8" fill="#3a8fd0" />
        </svg>
      </TaskIcon>
      <TaskIcon ml="ml-[9px]" w="w-[40px]">
        <svg width="23" height="25" viewBox="0 0 23 25">
          <path d="M6 7V4a5 5 0 0111 0v3" fill="none" stroke="#3aa4d8" strokeWidth="2" />
          <rect x="0" y="6" width="23" height="19" rx="2" fill="#f4f4f4" />
          <rect x="7" y="11" width="4" height="4" fill="#e8502f" /><rect x="12" y="11" width="4" height="4" fill="#7ab82e" />
          <rect x="7" y="16" width="4" height="4" fill="#2a9ae0" /><rect x="12" y="16" width="4" height="4" fill="#f4b400" />
        </svg>
      </TaskIcon>
      <TaskIcon ml="ml-[10px]" w="w-[40px]">
        <svg width="25" height="24" viewBox="0 0 25 24">
          <path d="M0 10L12.500 0 25 10v14H0z" fill="#2a8fd8" />
          <path d="M0 10l12.500 8L25 10v14H0z" fill="#8fcdf0" />
          <path d="M0 24l12.500-8L25 24z" fill="#5eb3e8" />
        </svg>
      </TaskIcon>
      <TaskIcon ml="ml-[9px]" w="w-[40px]">
        <div className="w-[25px] h-[25px] rounded-full bg-white flex items-center justify-center">
          <FaWhatsapp className="text-[#2aa866] text-[20px]" />
        </div>
      </TaskIcon>
      <TaskIcon ml="ml-[9px]" w="w-[40px]" bar>
        <svg width="26" height="26" viewBox="0 0 26 26">
          <circle cx="13" cy="13" r="12.500" fill="#e23d2e" />
          <path d="M13 13L2 7a12.500 12.500 0 00-.5 12l7 6.500 3-.5z" fill="#2ca04f" />
          <path d="M13 8h11.500a12.500 12.500 0 01-1 10.500L13 25.500l-.5-.5 6-8z" fill="#f7c93a" />
          <circle cx="13" cy="13" r="5.500" fill="#fff" /><circle cx="13" cy="13" r="4.300" fill="#3a80e0" />
        </svg>
      </TaskIcon>
      <div className="ml-[7px] w-[44px] h-full bg-[#4a4e53] relative flex items-center justify-center shrink-0">
        <div className="w-[22px] h-[22px] bg-[#eef2f6] flex items-center justify-center">
          <TableauLogo size={18} dark />
        </div>
        <div className="absolute bottom-0 left-0 right-0 h-[2px] bg-[#8fb7dc]" />
      </div>
      <TaskIcon ml="ml-[6px]" w="w-[40px]" bar>
        <svg width="22" height="26" viewBox="0 0 22 26">
          <path d="M5 0h14l3 22-16 3z" fill="#e4eeee" />
          <path d="M5 0L1 20l5 5 3-22z" fill="#3f9a9c" />
          <path d="M8 3h9l2 17-10 2z" fill="#8cc7c8" />
        </svg>
      </TaskIcon>
      <TaskIcon ml="ml-[9px]" w="w-[40px]" bar>
        <svg width="26" height="28" viewBox="0 0 26 28">
          <ellipse cx="12" cy="16" rx="11" ry="10" fill="#dfe7ee" />
          <circle cx="7" cy="13" r="2" fill="#d94b3a" /><circle cx="12" cy="10" r="2" fill="#e8b93a" /><circle cx="6" cy="19" r="2" fill="#3a90c8" /><circle cx="11" cy="22" r="1.800" fill="#58a84a" />
          <path d="M13 24L23 1l2 1-8 23z" fill="#e89a3a" />
        </svg>
      </TaskIcon>
      <div className="flex-1" />
      <svg width="26" height="24" viewBox="0 0 28 24" className="shrink-0">
        <circle cx="18" cy="8" r="7" fill="#f2a03a" />
        <path d="M5 23a5 5 0 01-1-10 7 7 0 0113-2 5 5 0 015 4 4.500 4.500 0 012 8z" fill="#b8d4f0" />
      </svg>
      <span className="ml-[6px] w-[29px] text-[14px] tracking-[-0.4px] whitespace-nowrap shrink-0">28°C</span>
      <span className="ml-[9px] w-[87px] text-[14px] tracking-[-0.15px] whitespace-nowrap shrink-0">Mostly cloudy</span>
      <svg width="13" height="8" viewBox="0 0 13 8" fill="none" stroke="#fff" strokeWidth="1.100" className="ml-[23px] shrink-0"><path d="M.5 7.500l6-6.500 6 6.500" /></svg>
      <svg width="16" height="10" viewBox="0 0 16 10" fill="none" stroke="#fff" className="ml-[11px] shrink-0"><rect x=".5" y=".5" width="13" height="9" /><rect x="2" y="2" width="6" height="6" fill="#fff" stroke="none" /><path d="M15 3v4" strokeWidth="1.500" /></svg>
      <svg width="14" height="14" viewBox="0 0 14 14" fill="none" stroke="#ddd" className="ml-[9px] shrink-0"><path d="M1 13A12 12 0 0113 1M4 13A9 9 0 0113 4M7 13a6 6 0 016-6M10 13a3 3 0 013-3" /></svg>
      <svg width="17" height="14" viewBox="0 0 17 14" fill="none" stroke="#fff" className="ml-[8px] shrink-0"><path d="M1 5h2.500L7 1.500v11L3.500 9H1zM10 4.500c1 1.500 1 3.500 0 5M12.500 2.500c2 3 2 6 0 9" /></svg>
      <div className="ml-[3px] w-[34px] text-[13px] leading-[20px] tracking-[-0.6px] text-center shrink-0">
        <div>ENG</div><div>UK</div>
      </div>
      <div className="ml-[4px] w-[66px] text-[13px] leading-[20px] tracking-[-0.7px] text-center shrink-0 whitespace-nowrap">
        <div>08:23 AM</div><div>29-10-2023</div>
      </div>
      <div className="ml-[14px] mr-[21px] w-[20px] h-[28px] relative shrink-0">
        <svg width="16" height="16" viewBox="0 0 16 16" className="mt-[4px]"><path d="M0 0h16v12H8l-3 3v-3H0z" fill="#fff" /><path d="M3 3h10M3 6h10M3 9h7" stroke="#333" /></svg>
        <div className="absolute left-[6px] top-[11px] w-[17px] h-[17px] rounded-full bg-[#2b3946] border border-[#999] text-[11px] leading-[15px] text-center">1</div>
      </div>
    </div>
  );
}

export default function App() {
  return (
    <div className={`w-[1366px] h-[768px] overflow-hidden flex flex-col bg-[#f5f5f5] ${UI}`}>
      <div className="h-[22px] bg-white flex items-center pl-[4px] shrink-0 relative font-['Roboto',sans-serif]">
        <TableauLogo />
        <span className="ml-[4px] text-[12px] text-[#222] tracking-[-0.43px] whitespace-nowrap">Tableau - Agriculture Production story - Tableau licence expires in 11 days</span>
        <div className="ml-auto flex items-center">
          <div className="w-[10px] h-px bg-[#222]" />
          <svg width="11" height="12" viewBox="0 0 11 12" fill="none" stroke="#222" className="ml-[34px]"><rect x=".5" y="3" width="7" height="8.500" /><path d="M3 3V.5h7.500V9H8" /></svg>
          <svg width="12" height="12" viewBox="0 0 12 12" fill="none" stroke="#222" className="ml-[34px] mr-[19px]"><path d="M.5.5l11 11M11.500.5l-11 11" /></svg>
        </div>
      </div>
      <div className="h-[21px] bg-white flex items-center pl-[8px] gap-[16px] text-[12px] tracking-[-0.12px] text-[#222] shrink-0 font-['Roboto',sans-serif]">
        {["File", "Data", "Worksheet", "Dashboard", "Story", "Analysis", "Map", "Format", "Server", "Window", "Help"].map((m) => <span key={m}>{m}</span>)}
      </div>
      <Toolbar />
      <div className="h-[594px] flex shrink-0 overflow-hidden">
        <DataPane />
        <MiddleColumn />
        <RightColumn />
      </div>
      <TabBar />
      <StatusBar />
      <Taskbar />
    </div>
  );
}
